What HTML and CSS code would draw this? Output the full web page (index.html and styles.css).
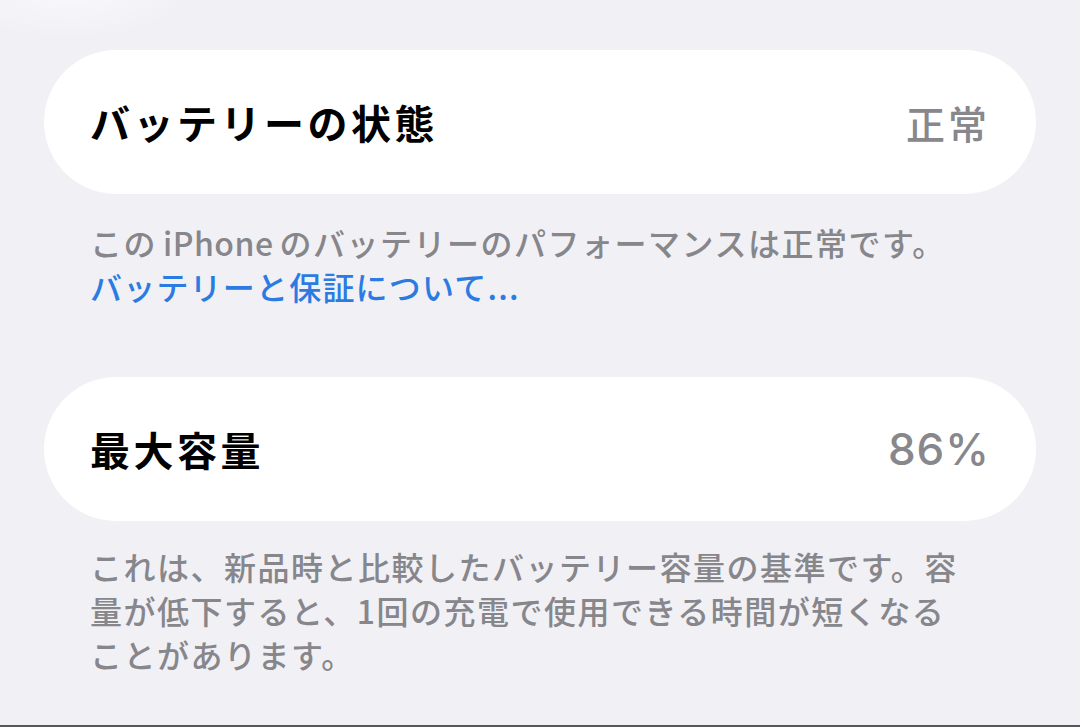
FILE: index.html
```html
<!DOCTYPE html>
<html lang="ja">
<head>
<meta charset="utf-8">
<title>バッテリー</title>
<link rel="stylesheet" href="styles.css">
</head>
<body>
<main class="page">
  <section class="group">
    <div class="card">
      <span class="label">バッテリーの状態</span>
      <span class="value">正常</span>
    </div>
    <p class="note first">この<span class="latin">iPhone</span>のバッテリーのパフォーマンスは正常です。<br><a class="link" href="#">バッテリーと保証について...</a></p>
  </section>
  <section class="group">
    <div class="card">
      <span class="label">最大容量</span>
      <span class="value num">86%</span>
    </div>
    <p class="note second">これは、新品時と比較したバッテリー容量の基準です。容<br>量が低下すると、1回の充電で使用できる時間が短くなる<br>ことがあります。</p>
  </section>
</main>
</body>
</html>
```
FILE: styles.css
```css
html, body {
  margin: 0;
  padding: 0;
}
body {
  width: 1080px;
  height: 727px;
  box-sizing: border-box;
  overflow: hidden;
  background: #f1f0f5;
  border-bottom: 2px solid #56565a;
  font-family: "Noto Sans CJK JP", "Noto Sans", sans-serif;
  position: relative;
}
body::before {
  content: "";
  position: absolute;
  left: -60px;
  top: -70px;
  width: 260px;
  height: 110px;
  border-radius: 50%;
  background: radial-gradient(ellipse at center, rgba(255,255,255,0.6), rgba(255,255,255,0) 70%);
}
.page {
  position: relative;
  padding: 50px 44px 0 44px;
  display: flex;
  flex-direction: column;
  gap: 69px;
}
.card {
  height: 144px;
  border-radius: 72px;
  background: #ffffff;
  display: flex;
  align-items: center;
  justify-content: space-between;
  padding: 0 46px 0 46px;
}
.label {
  font-size: 40px;
  font-weight: 700;
  color: #000;
  letter-spacing: 3.5px;
}
.value {
  font-size: 39px;
  font-weight: 500;
  color: #87878c;
  letter-spacing: 3px;
}
.value.num {
  font-family: "Inter", "Noto Sans", sans-serif;
  font-size: 44px;
  font-weight: 500;
  letter-spacing: 1px;
}
.note {
  margin: 0;
  padding: 0 46px;
  font-size: 32px;
  font-weight: 500;
  line-height: 44px;
  letter-spacing: 1.5px;
  color: #86868b;
}
.latin {
  margin: 0 6px;
  letter-spacing: 0.5px;
}
.note.first {
  margin-top: 26px;
}
.note.second {
  margin-top: 23px;
}
.link {
  color: #2b7be2;
  text-decoration: none;
  letter-spacing: 1.2px;
}
```
